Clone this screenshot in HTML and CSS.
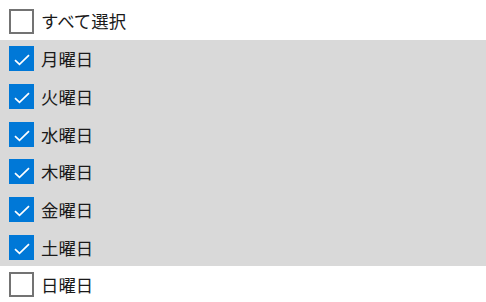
FILE: index.html
```html
<!DOCTYPE html>
<html lang="ja">
<head>
<meta charset="utf-8">
<link rel="stylesheet" href="styles.css">
</head>
<body>
<ul class="list">
  <li class="row"><span class="box"></span><span class="label">すべて選択</span></li>
  <li class="row sel"><span class="box on"><svg viewBox="0 0 25 25"><path d="M6 14.2l4.5 4.2 9.5-9.2"/></svg></span><span class="label">月曜日</span></li>
  <li class="row sel"><span class="box on"><svg viewBox="0 0 25 25"><path d="M6 14.2l4.5 4.2 9.5-9.2"/></svg></span><span class="label">火曜日</span></li>
  <li class="row sel"><span class="box on"><svg viewBox="0 0 25 25"><path d="M6 14.2l4.5 4.2 9.5-9.2"/></svg></span><span class="label">水曜日</span></li>
  <li class="row sel"><span class="box on"><svg viewBox="0 0 25 25"><path d="M6 14.2l4.5 4.2 9.5-9.2"/></svg></span><span class="label">木曜日</span></li>
  <li class="row sel"><span class="box on"><svg viewBox="0 0 25 25"><path d="M6 14.2l4.5 4.2 9.5-9.2"/></svg></span><span class="label">金曜日</span></li>
  <li class="row sel"><span class="box on"><svg viewBox="0 0 25 25"><path d="M6 14.2l4.5 4.2 9.5-9.2"/></svg></span><span class="label">土曜日</span></li>
  <li class="row"><span class="box"></span><span class="label">日曜日</span></li>
</ul>
</body>
</html>
```
FILE: styles.css
```css
html, body { margin: 0; padding: 0; background: #fff; }
body { font-family: "Noto Sans CJK JP", "Noto Sans", sans-serif; color: #1a1a1a; }
.list { list-style: none; margin: 0; padding: 2.3px 0 0 0; }
.row { display: flex; align-items: center; height: 37.7px; padding-left: 9px; box-sizing: border-box; }
.row.sel { background: #d9d9d9; }
.box { width: 25px; height: 25px; box-sizing: border-box; border: 2px solid #737373; background: #fff; flex: none; display: flex; }
.box.on { background: #0078d7; border: 0; }
.box svg { width: 25px; height: 25px; fill: none; stroke: #fff; stroke-width: 1.7; }
.label { margin-left: 7px; font-size: 17.4px; line-height: 1; }
```
